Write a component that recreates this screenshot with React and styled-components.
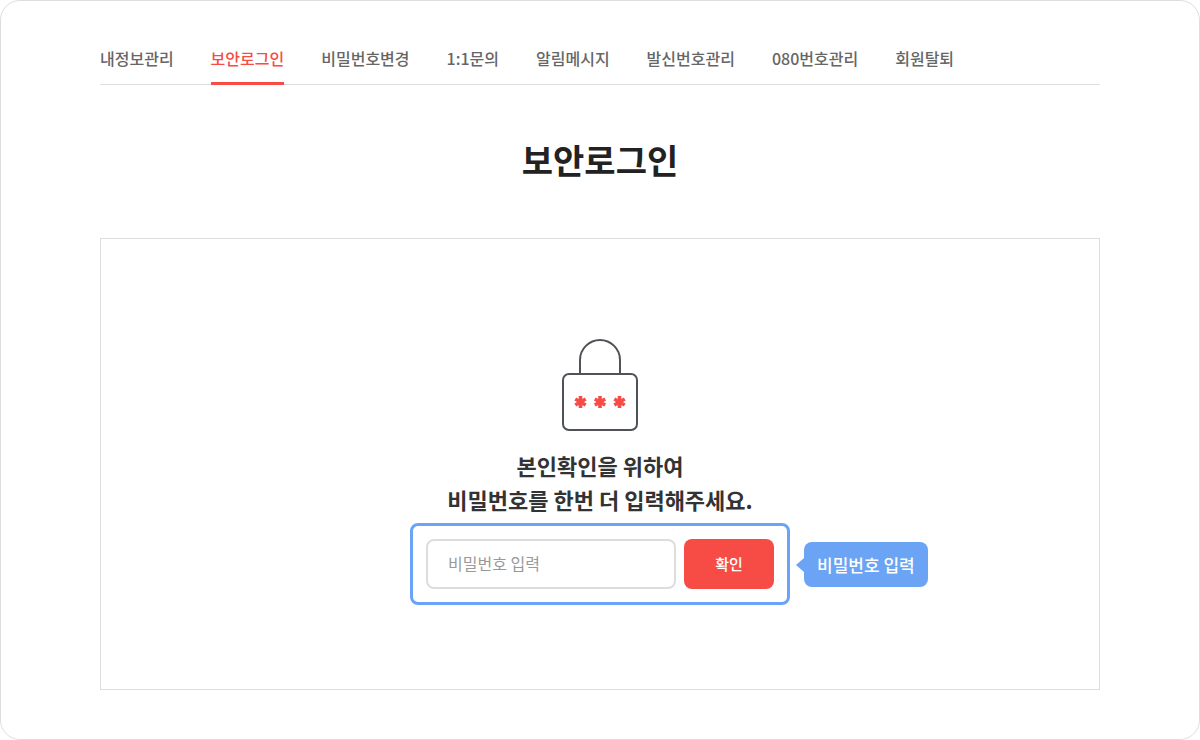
import React, { useState } from "react";
import styled, { createGlobalStyle } from "styled-components";

const GlobalStyle = createGlobalStyle`
  * {
    box-sizing: border-box;
  }

  body {
    margin: 0;
    background-color: #fff;
    color: #222;
    font-family: "Noto Sans CJK KR", sans-serif;
  }

  button,
  input {
    font-family: inherit;
  }
`;

const Page = styled.div`
  min-height: 100vh;
  padding: 35px 99px 49px;
  border: 1px solid #ddd;
  border-radius: 20px;
  display: flex;
  flex-direction: column;
`;

const TabNav = styled.nav`
  display: flex;
  gap: 37px;
  height: 49px;
  border-bottom: 1px solid #ddd;
`;

const TabLink = styled.a`
  height: 49px;
  line-height: 44px;
  font-size: 16px;
  font-weight: 500;
  white-space: nowrap;
  text-decoration: none;
  color: ${(props) => (props.$active ? "#f74c46" : "#666")};
  border-bottom: 3px solid
    ${(props) => (props.$active ? "#f74c46" : "transparent")};
`;

const Title = styled.h1`
  margin: 47px 0 51px;
  font-size: 34px;
  line-height: 55px;
  font-weight: 700;
  text-align: center;
`;

const Panel = styled.main`
  flex: 1;
  padding: 99px 20px 84px;
  border: 1px solid #ddd;
  display: flex;
  flex-direction: column;
  align-items: center;
`;

const Guide = styled.p`
  margin: 16px 0 7px;
  font-size: 22px;
  line-height: 34px;
  font-weight: 700;
  color: #333;
  text-align: center;
`;

const FormWrap = styled.div`
  position: relative;
`;

const PasswordForm = styled.form`
  display: flex;
  gap: 8px;
  padding: 13px;
  border: 3px solid #6ba4f4;
  border-radius: 8px;
`;

const PasswordInput = styled.input`
  width: 250px;
  height: 50px;
  padding: 0 20px 2px;
  border: 2px solid #ddd;
  border-radius: 8px;
  font-size: 16px;
  outline: none;

  &::placeholder {
    color: #999;
  }
`;

const SubmitButton = styled.button`
  width: 90px;
  height: 50px;
  padding: 0 0 2px;
  border: 0;
  border-radius: 8px;
  background-color: #f74c46;
  color: #fff;
  font-size: 15px;
  font-weight: 500;
  cursor: pointer;
`;

const Tooltip = styled.label`
  position: absolute;
  left: 100%;
  top: 19px;
  height: 45px;
  margin-left: 14px;
  padding: 0 13px;
  border-radius: 8px;
  background-color: #6ba4f4;
  color: #fff;
  font-size: 17px;
  line-height: 45px;
  font-weight: 500;
  white-space: nowrap;

  &::before {
    content: "";
    position: absolute;
    right: 100%;
    top: 16px;
    border: solid transparent;
    border-width: 7px 8px 7px 0;
    border-right-color: #6ba4f4;
  }
`;

const LockIcon = () => (
  <svg width="78" height="94" viewBox="0 0 78 94" fill="none" aria-hidden="true">
    <path d="M19 36V22a20 20 0 0 1 40 0v14" stroke="#4f5357" strokeWidth="2" />
    <rect x="2" y="36" width="74" height="56" rx="6" stroke="#4f5357" strokeWidth="2" />
    {[19.5, 39, 58.5].map((x) => (
      <path
        key={x}
        d={`M${x} 58v12M${x - 5.2} 61l10.4 6M${x - 5.2} 67l10.4 -6`}
        stroke="#f74c46"
        strokeWidth="3.6"
      />
    ))}
  </svg>
);

const tabs = [
  "내정보관리",
  "보안로그인",
  "비밀번호변경",
  "1:1문의",
  "알림메시지",
  "발신번호관리",
  "080번호관리",
  "회원탈퇴",
];

const App = () => {
  const [password, setPassword] = useState("");

  return (
    <Page>
      <GlobalStyle />
      <TabNav>
        {tabs.map((tab) => (
          <TabLink key={tab} href="#" $active={tab === "보안로그인"}>
            {tab}
          </TabLink>
        ))}
      </TabNav>
      <Title>보안로그인</Title>
      <Panel>
        <LockIcon />
        <Guide>
          본인확인을 위하여
          <br />
          비밀번호를 한번 더 입력해주세요.
        </Guide>
        <FormWrap>
          <PasswordForm onSubmit={(e) => e.preventDefault()}>
            <PasswordInput
              id="password"
              type="password"
              placeholder="비밀번호 입력"
              value={password}
              onChange={(e) => setPassword(e.target.value)}
            />
            <SubmitButton type="submit">확인</SubmitButton>
          </PasswordForm>
          <Tooltip htmlFor="password">비밀번호 입력</Tooltip>
        </FormWrap>
      </Panel>
    </Page>
  );
};

export default App;
